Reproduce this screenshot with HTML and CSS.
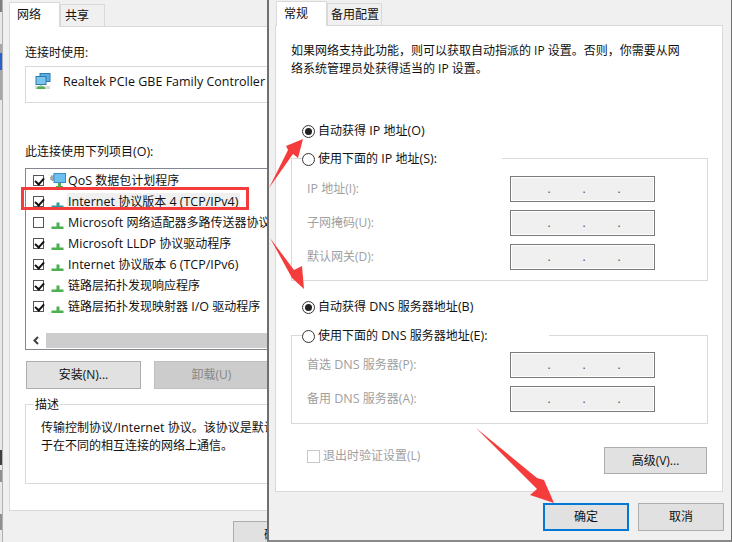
FILE: index.html
```html
<!DOCTYPE html>
<html lang="zh-CN">
<head>
<meta charset="utf-8">
<title>网络属性</title>
<link rel="stylesheet" href="styles.css">
</head>
<body>
<div class="desktop">
  <div class="sliver"></div>
  <section class="win win-left">
    <div class="tabs">
      <div class="tab active">网络</div>
      <div class="tab tab-share">共享</div>
    </div>
    <div class="panel panel-left">
      <div class="lbl lbl-connect">连接时使用:</div>
      <div class="adapter">
        <svg class="adapter-icon" width="16" height="16" viewBox="0 0 16 16">
          <rect x="5" y="0.5" width="10" height="8" fill="#5aaee0" stroke="#2a7ab0"/>
          <rect x="1" y="3.5" width="10" height="8" fill="#7cc4ee" stroke="#2a7ab0"/>
          <rect x="0" y="13" width="15" height="3" fill="#d8d8d8"/>
          <path d="M6 11v2M3 14h6l1 2H2z" fill="#4cb050" stroke="#4cb050"/>
        </svg>
        <span class="en">Realtek PCIe GBE Family Controller</span>
      </div>
      <div class="lbl lbl-items">此连接使用下列项目<span class="en">(O):</span></div>
      <div class="listbox">
        <ul class="rows">
          <li class="row"><span class="check on"></span>
            <svg class="row-icon" width="16" height="16" viewBox="0 0 16 16">
              <circle cx="3" cy="5" r="2.6" fill="#a8a8a8" stroke="#808080" stroke-dasharray="1 1"/>
              <rect x="4" y="0.5" width="11.500" height="9" fill="#6cc0f0" stroke="#3a8ec8"/>
              <rect x="8" y="10" width="3" height="3" fill="#4cb050"/>
              <rect x="6" y="13" width="7" height="2" fill="#4cb050"/>
            </svg>
            <span class="row-text"><span class="en">QoS </span>数据包计划程序</span></li>
          <li class="row"><span class="check on"></span>
            <svg class="row-icon" width="16" height="16" viewBox="0 0 16 16">
              <path d="M6.500 8.500h3v3h4v2.500h-12v-2.500h5z" fill="#2f9aa0"/>
            </svg>
            <span class="row-text selected"><span class="en">Internet </span>协议版本<span class="en"> 4 (TCP/IPv4)</span></span></li>
          <li class="row"><span class="check"></span>
            <svg class="row-icon" width="16" height="16" viewBox="0 0 16 16">
              <path d="M6.500 7.500h3v4h4v2.500h-12v-2.500h5z" fill="#4cb050"/>
            </svg>
            <span class="row-text"><span class="en">Microsoft </span>网络适配器多路传送器协议</span></li>
          <li class="row"><span class="check on"></span>
            <svg class="row-icon" width="16" height="16" viewBox="0 0 16 16">
              <path d="M6.500 7.500h3v4h4v2.500h-12v-2.500h5z" fill="#4cb050"/>
            </svg>
            <span class="row-text"><span class="en">Microsoft LLDP </span>协议驱动程序</span></li>
          <li class="row"><span class="check on"></span>
            <svg class="row-icon" width="16" height="16" viewBox="0 0 16 16">
              <path d="M6.500 7.500h3v4h4v2.500h-12v-2.500h5z" fill="#4cb050"/>
            </svg>
            <span class="row-text"><span class="en">Internet </span>协议版本<span class="en"> 6 (TCP/IPv6)</span></span></li>
          <li class="row"><span class="check on"></span>
            <svg class="row-icon" width="16" height="16" viewBox="0 0 16 16">
              <path d="M6.500 7.500h3v4h4v2.500h-12v-2.500h5z" fill="#4cb050"/>
            </svg>
            <span class="row-text">链路层拓扑发现响应程序</span></li>
          <li class="row"><span class="check on"></span>
            <svg class="row-icon" width="16" height="16" viewBox="0 0 16 16">
              <path d="M6.500 7.500h3v4h4v2.500h-12v-2.500h5z" fill="#4cb050"/>
            </svg>
            <span class="row-text">链路层拓扑发现映射器<span class="en"> I/O </span>驱动程序</span></li>
        </ul>
        <div class="hscroll">
          <svg class="hscroll-arrow" width="19" height="15" viewBox="0 0 19 15"><path d="M11 4l-3.500 3.500 3.500 3.500" fill="none" stroke="#404040" stroke-width="2"/></svg>
          <div class="hscroll-thumb"></div>
        </div>
      </div>
      <div class="btn-row">
        <div class="btn btn-install">安装(N)...</div>
        <div class="btn btn-off">卸载(U)</div>
      </div>
      <div class="group group-desc">
        <div class="legend legend-desc">描述</div>
        <p class="desc">传输控制协议<span class="en">/Internet </span>协议。该协议是默认的广域网络协议，用<br>于在不同的相互连接的网络上通信。</p>
      </div>
    </div>
    <div class="foot-left"><div class="btn btn-foot">确定</div></div>
  </section>

  <section class="win win-right">
    <div class="tabs tabs-right">
      <div class="tab active">常规</div>
      <div class="tab tab-alt">备用配置</div>
    </div>
    <div class="panel panel-right">
      <p class="intro">如果网络支持此功能，则可以获取自动指派的 IP 设置。否则，你需要从网<br>络系统管理员处获得适当的 IP 设置。</p>

      <div class="radio-line radio-first"><span class="radio on"></span><span>自动获得<span class="en"> IP </span>地址<span class="en">(O)</span></span></div>
      <div class="field-group">
        <div class="radio-line legend-radio legend-ip"><span class="radio"></span><span>使用下面的<span class="en"> IP </span>地址<span class="en">(S):</span></span></div>
        <div class="field"><span class="field-label"><span class="en">IP </span>地址(I):</span><div class="ip"><i>.</i><i>.</i><i>.</i></div></div>
        <div class="field"><span class="field-label">子网掩码(U):</span><div class="ip"><i>.</i><i>.</i><i>.</i></div></div>
        <div class="field"><span class="field-label">默认网关(D):</span><div class="ip"><i>.</i><i>.</i><i>.</i></div></div>
      </div>

      <div class="radio-line radio-dns"><span class="radio on"></span><span>自动获得<span class="en"> DNS </span>服务器地址<span class="en">(B)</span></span></div>
      <div class="field-group field-group-dns">
        <div class="radio-line legend-radio legend-dns"><span class="radio"></span><span>使用下面的<span class="en"> DNS </span>服务器地址<span class="en">(E):</span></span></div>
        <div class="field"><span class="field-label">首选<span class="en"> DNS </span>服务器(P):</span><div class="ip"><i>.</i><i>.</i><i>.</i></div></div>
        <div class="field"><span class="field-label">备用<span class="en"> DNS </span>服务器(A):</span><div class="ip"><i>.</i><i>.</i><i>.</i></div></div>
      </div>

      <div class="bottom-row">
        <div class="verify"><span class="check check-off"></span><span>退出时验证设置(L)</span></div>
        <div class="btn btn-adv">高级(V)...</div>
      </div>
    </div>
    <div class="foot-right">
      <div class="btn btn-ok">确定</div>
      <div class="btn btn-cancel">取消</div>
    </div>
  </section>

  <div class="redbox"></div>
  <svg class="arrows" width="732" height="542" viewBox="0 0 732 542">
    <path d="M269 188L288 150L286 146L303 139L298 158L293 154Z" fill="#f53c3c"/>
    <path d="M270 238L294 270L302 266L304 289L292 278Z" fill="#f53c3c"/>
    <path d="M476 428L537 478L544 480L554 503L530 495L537 489Z" fill="#f53c3c"/>
  </svg>
</div>
</body>
</html>
```
FILE: styles.css
```css
* { box-sizing: border-box; }
html, body { margin: 0; padding: 0; }
body {
  width: 732px;
  height: 542px;
  overflow: hidden;
  background: #fff;
  font-family: "Open Sans", "Noto Sans CJK SC", sans-serif;
  font-size: 12px;
  line-height: 16px;
  color: #111;
}
.en { font-size: 12.5px; }
.desktop { position: relative; width: 732px; height: 542px; overflow: hidden; background: #e8e8e8; }
.sliver {
  position: absolute; left: 0; top: 0; width: 2px; height: 542px;
  background: linear-gradient(to bottom,
    #808080 0, #808080 12px, #e8e8e8 12px, #e8e8e8 44px,
    #a8a8a8 44px, #a8a8a8 53px, #2a5fd0 53px, #2a5fd0 70px,
    #a8a8a8 70px, #a8a8a8 100px, #e8e8e8 100px, #e8e8e8 450px,
    #404040 450px, #404040 465px, #e8e8e8 465px, #e8e8e8 470px,
    #909090 470px, #909090 482px, #e8e8e8 482px, #e8e8e8 514px,
    #909090 514px, #909090 530px, #e8e8e8 530px);
}
.win { position: absolute; top: 0; background: #f0f0f0; overflow: hidden; }
.win-left { left: 2px; width: 420px; height: 542px; border-left: 1px solid #b0b0b0; }
.win-right { left: 267px; width: 465px; height: 542px; border-left: 2px solid #707070; border-right: 1px solid #707070; border-bottom: 2px solid #8a8a8a; }

.tabs { display: flex; align-items: flex-end; height: 26px; padding-left: 6px; position: relative; }
.tabs-right { height: 25px; padding-left: 7px; }
.tab {
  height: 22px;
  padding: 0 8px;
  line-height: 21px;
  background: #f0f0f0;
  border: 1px solid #d9d9d9;
  border-bottom: 0;
  white-space: nowrap;
  font-size: 12px;
}
.tab-share { width: 45px; padding: 0 0 0 4px; line-height: 22px; }
.tab-alt { width: 55px; padding: 0 0 0 3px; }
.tab.active { height: 25px; width: 51px; padding: 0 7px; line-height: 24px; background: #fff; margin-bottom: -1px; position: relative; z-index: 1; font-size: 12px; }
.panel { background: #fff; border: 1px solid #d9d9d9; }
.panel-left { margin-left: 6px; width: 460px; height: 485px; padding: 18px 15px 0; }
.lbl-connect { height: 16px; }
.adapter { display: flex; align-items: center; gap: 12px; width: 400px; height: 37px; margin-top: 5px; padding: 0 0 6px 9px; border: 1px solid #d9d9d9; }
.adapter-icon { margin-bottom: 2px; }
.lbl-items { margin-top: 41px; height: 16px; }
.listbox { width: 400px; height: 182px; margin-top: 8px; border: 1px solid #828790; display: flex; flex-direction: column; background: #fff; }
.rows { list-style: none; margin: 0; padding: 1px 0 0 7px; flex: 1; }
.row { display: flex; align-items: center; height: 21px; white-space: nowrap; }
.check { display: block; width: 11px; height: 11px; border: 1px solid #555; margin-right: 6px; flex: none; background: #fff; position: relative; }
.check.on::after { content: ""; position: absolute; left: 1px; top: 0; width: 7px; height: 4px; border-left: 2px solid #111; border-bottom: 2px solid #111; transform: rotate(-48deg) translate(-1px, 1px); }
.check-off { width: 13px; height: 13px; border-color: #c8c8c8; margin: 0; }
.row-icon { flex: none; margin-right: 1px; }
.row-text { padding: 0 2px 0 1px; line-height: 17px; }
.row-text.selected { background: #f0f0f0; }
.hscroll { display: flex; height: 15px; margin-bottom: 1px; margin-left: 1px; }
.hscroll-arrow { flex: none; }
.hscroll-thumb { flex: 1; background: #cdcdcd; }

.btn { display: flex; align-items: center; justify-content: center; height: 28px; background: #e1e1e1; border: 1px solid #adadad; white-space: nowrap; }
.btn-row { display: flex; gap: 13px; margin-top: 11px; padding-left: 1px; }
.btn-install, .btn-off { width: 115px; flex: none; }
.btn-off { background: #cccccc; border-color: #bfbfbf; color: #888; }
.group { border: 1px solid #d9d9d9; position: relative; }
.group-desc { width: 400px; height: 80px; margin-top: 15px; padding: 14px 15px 0; }
.legend { position: absolute; left: 8px; top: -8px; padding: 0 1px; background: #fff; line-height: 16px; }
.desc { margin: 0; line-height: 18px; white-space: nowrap; }
.foot-left { padding: 10px 0 0 230px; }
.btn-foot { width: 86px; height: 28px; }

.panel-right { margin-left: 6px; width: 448px; height: 467px; padding: 16px 15px 0; position: relative; }
.intro { margin: 0; line-height: 18px; white-space: nowrap; }
.radio-line { display: flex; align-items: center; gap: 3px; height: 16px; white-space: nowrap; }
.radio { display: block; width: 13px; height: 13px; border: 1px solid #333; border-radius: 50%; background: #fff; flex: none; position: relative; }
.radio.on::after { content: ""; position: absolute; left: 2px; top: 2px; width: 7px; height: 7px; border-radius: 50%; background: #222; }
.radio-first { margin: 45px 0 0 11px; }
.field-group { position: relative; width: 417px; height: 123px; margin-top: 19px; border: 1px solid #d9d9d9; padding-top: 17px; }
.legend-radio { position: absolute; left: 10px; top: -8px; background: #fff; }
.legend-ip { width: 200px; }
.legend-dns { width: 247px; }
.field { display: flex; justify-content: space-between; align-items: center; height: 26px; margin-bottom: 8px; padding: 0 52px 0 15px; color: #a0a0a0; }
.field-label { white-space: nowrap; }
.ip { width: 145px; height: 26px; flex: none; display: flex; gap: 29px; padding: 0 0 0 35px; align-items: center; background: #f0f0f0; border: 1px solid #7a7a7a; box-shadow: inset 0 0 0 1px #fff; color: #555; }
.ip i { font-style: normal; width: 6px; text-align: center; }
.radio-dns { margin: 18px 0 0 11px; }
.field-group-dns { height: 89px; margin-top: 20px; padding-top: 16px; }
.bottom-row { display: flex; justify-content: space-between; align-items: flex-start; width: 416px; margin-top: 23px; padding-left: 16px; }
.verify { display: flex; align-items: center; gap: 3px; margin-top: 1px; color: #a0a0a0; }
.btn-adv { width: 103px; height: 27px; }
.foot-right { display: flex; gap: 9px; padding: 11px 0 0 274px; }
.btn-ok { width: 86px; border: 2px solid #0078d7; }
.btn-cancel { width: 86px; }

.redbox { position: absolute; left: 21px; top: 187px; width: 228px; height: 23px; border: 3px solid #f53c3c; }
.arrows { position: absolute; left: 0; top: 0; pointer-events: none; }
```
